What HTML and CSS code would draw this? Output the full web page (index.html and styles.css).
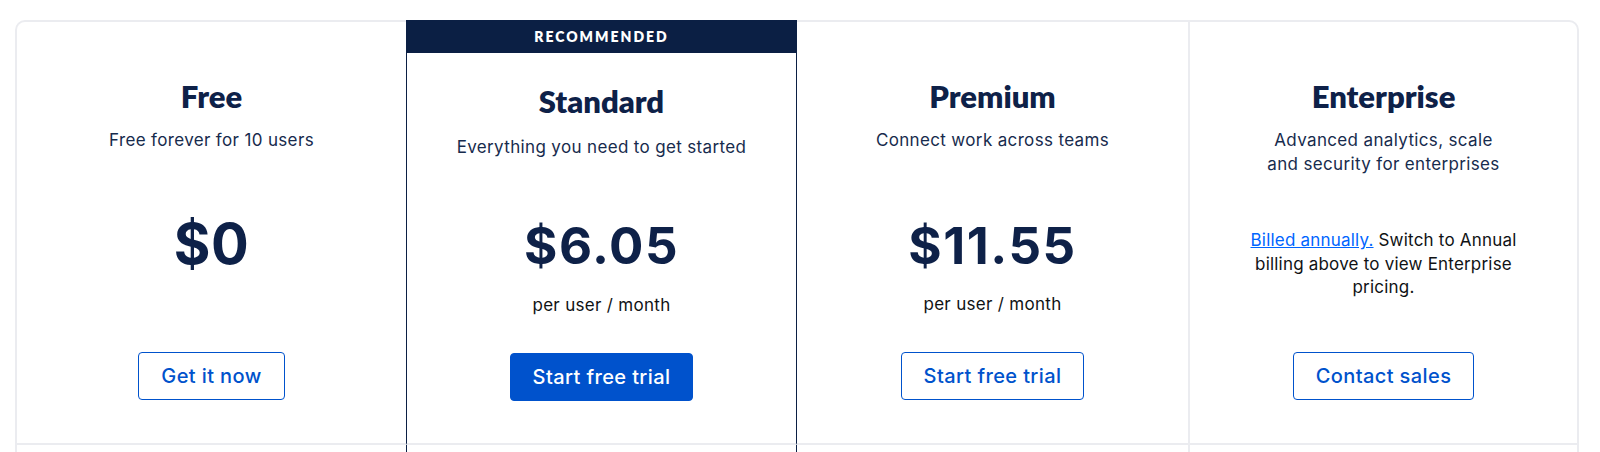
FILE: index.html
```html
<!DOCTYPE html>
<html lang="en">
<head>
<meta charset="utf-8">
<title>Pricing</title>
<link rel="stylesheet" href="styles.css">
</head>
<body>
<div class="plans">
  <section class="plan plan--free">
    <h2 class="plan__name">Free</h2>
    <p class="plan__desc">Free forever for 10 users</p>
    <div class="plan__price plan__price--big">$0</div>
    <a class="btn btn--outline" href="#">Get it now</a>
  </section>
  <section class="plan plan--standard">
    <div class="plan__badge">RECOMMENDED</div>
    <h2 class="plan__name">Standard</h2>
    <p class="plan__desc">Everything you need to get started</p>
    <div class="plan__price">$6.05</div>
    <p class="plan__unit">per user / month</p>
    <a class="btn btn--primary" href="#">Start free trial</a>
  </section>
  <section class="plan plan--premium">
    <h2 class="plan__name">Premium</h2>
    <p class="plan__desc">Connect work across teams</p>
    <div class="plan__price">$11.55</div>
    <p class="plan__unit">per user / month</p>
    <a class="btn btn--outline" href="#">Start free trial</a>
  </section>
  <section class="plan plan--enterprise">
    <h2 class="plan__name">Enterprise</h2>
    <p class="plan__desc plan__desc--narrow">Advanced analytics, scale and security for enterprises</p>
    <p class="plan__note"><a class="plan__link" href="#">Billed annually.</a> Switch to Annual billing above to view Enterprise pricing.</p>
    <a class="btn btn--outline" href="#">Contact sales</a>
  </section>
  <div class="foot foot--free"></div>
  <div class="foot foot--standard"></div>
  <div class="foot foot--premium"></div>
  <div class="foot foot--enterprise"></div>
</div>
</body>
</html>
```
FILE: styles.css
```css
* { box-sizing: border-box; }
html, body { margin: 0; padding: 0; background: #ffffff; }
body {
  font-family: "Inter", "Open Sans", sans-serif;
  color: #172b4d;
  overflow: hidden;
}

.plans {
  display: grid;
  grid-template-columns: repeat(4, 391px);
  margin: 20px 0 0 15px;
}

.plan {
  display: flex;
  flex-direction: column;
  align-items: center;
  text-align: center;
  min-height: 425px;
  padding: 56px 20px 43px;
  border-top: 2px solid #ebecf0;
  border-bottom: 2px solid #ebecf0;
}
.plan--free {
  border-left: 2px solid #ebecf0;
  border-top-left-radius: 10px;
}
.plan--standard {
  border-top: 0;
  border-left: 1px solid #0b1f44;
  border-right: 1px solid #0b1f44;
  padding-top: 0;
  padding-bottom: 42px;
}
.plan--enterprise {
  border-left: 2px solid #ebecf0;
  border-right: 2px solid #ebecf0;
  border-top-right-radius: 10px;
}

.plan__badge {
  align-self: stretch;
  margin: 0 -21px 30px;
  height: 33px;
  background: #0b1f44;
  color: #ffffff;
  font-family: "Lato", sans-serif;
  font-size: 14px;
  font-weight: 800;
  letter-spacing: 2px;
  display: flex;
  align-items: center;
  justify-content: center;
}

.plan__name {
  margin: 0;
  font-family: "Lato", sans-serif;
  font-size: 31px;
  line-height: 36px;
  font-weight: 800;
  color: #0e2148;
}

.plan__desc {
  margin: 14px 0 0;
  font-size: 17px;
  line-height: 24px;
  letter-spacing: 0.35px;
  color: #172b4d;
}
.plan--standard .plan__desc { margin-top: 16px; }
.plan__desc--narrow { max-width: 240px; }

.plan__price {
  margin-top: 56px;
  font-size: 51px;
  line-height: 62px;
  font-weight: 700;
  letter-spacing: 1.5px;
  color: #0e2148;
}
.plan--premium .plan__price { margin-top: 63px; }
.plan__price--big {
  margin-top: 58px;
  font-size: 56px;
  line-height: 68px;
  letter-spacing: 0.5px;
}

.plan__unit {
  margin: 16px 0 0;
  font-size: 17px;
  line-height: 24px;
  letter-spacing: 0.3px;
  color: #101214;
}
.plan--premium .plan__unit { margin-top: 15px; }

.plan__note {
  margin: 53px 0 0;
  max-width: 300px;
  font-size: 17px;
  line-height: 23.5px;
  letter-spacing: 0.2px;
  color: #101214;
}
.plan__link {
  color: #0065ff;
  text-decoration: underline;
}

.btn {
  margin-top: auto;
  height: 48px;
  padding: 0 22px;
  display: inline-flex;
  align-items: center;
  justify-content: center;
  border-radius: 4px;
  font-size: 20px;
  font-weight: 500;
  letter-spacing: 0.4px;
  text-decoration: none;
}
.btn--outline {
  border: 1px solid #0052cc;
  color: #0052cc;
  background: #ffffff;
}
.btn--primary {
  border: 1px solid #0052cc;
  background: #0052cc;
  color: #ffffff;
}

.foot { height: 40px; }
.foot--free { border-left: 2px solid #ebecf0; }
.foot--standard {
  border-left: 1px solid #0b1f44;
  border-right: 1px solid #0b1f44;
}
.foot--enterprise {
  border-left: 2px solid #ebecf0;
  border-right: 2px solid #ebecf0;
}
```
